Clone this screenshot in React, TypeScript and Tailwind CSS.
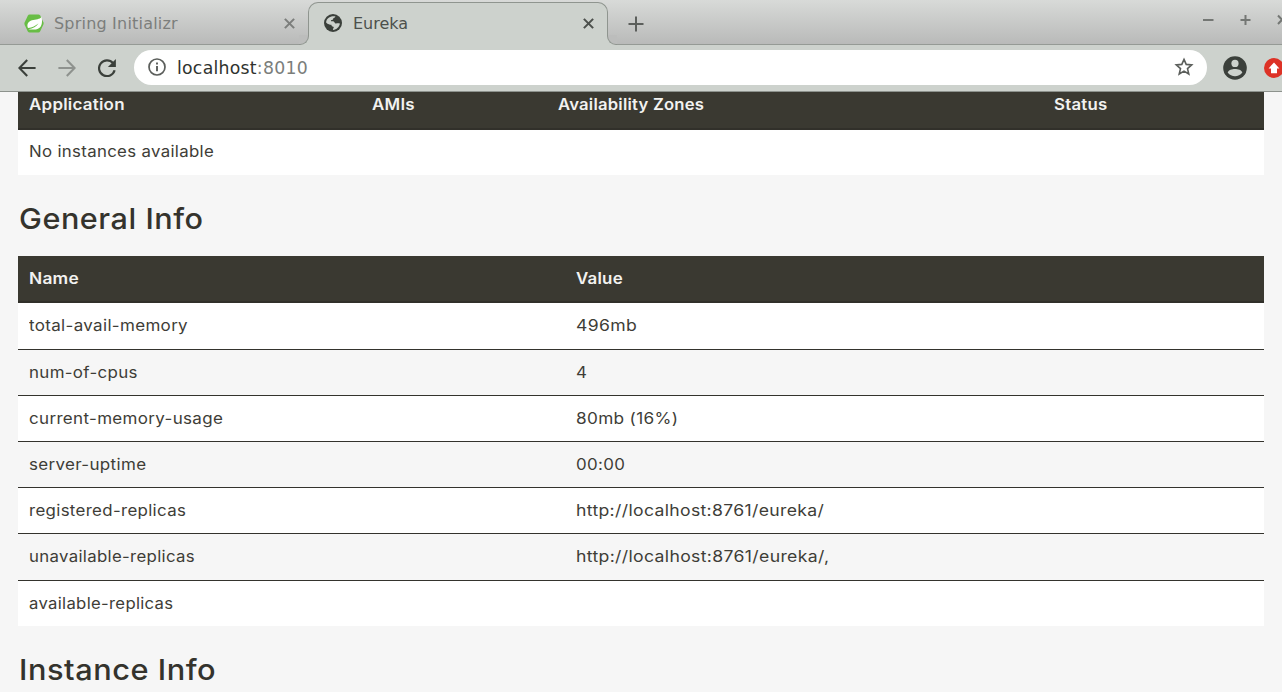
import React from "react";

type Row = { name: string; nameClass: string; value: string; valueClass: string };

const rows: Row[] = [
  { name: "total-avail-memory", nameClass: "scale-x-[1.096]", value: "496mb", valueClass: "scale-x-[1.134]" },
  { name: "num-of-cpus", nameClass: "scale-x-[1.09]", value: "4", valueClass: "scale-x-[1.09]" },
  { name: "current-memory-usage", nameClass: "scale-x-[1.096]", value: "80mb (16%)", valueClass: "scale-x-[1.11]" },
  { name: "server-uptime", nameClass: "scale-x-[1.096]", value: "00:00", valueClass: "scale-x-[1.09]" },
  { name: "registered-replicas", nameClass: "scale-x-[1.088]", value: "http://localhost:8761/eureka/", valueClass: "scale-x-[1.135]" },
  { name: "unavailable-replicas", nameClass: "scale-x-[1.083]", value: "http://localhost:8761/eureka/,", valueClass: "scale-x-[1.137]" },
  { name: "available-replicas", nameClass: "scale-x-[1.075]", value: "", valueClass: "" },
];

function CloseIcon({ className }: { className: string }) {
  return (
    <svg viewBox="0 0 10 10" className={className} fill="none" stroke="currentColor" strokeWidth="1.9">
      <path d="M0.8 0.8 L9.2 9.2 M9.2 0.8 L0.8 9.2" />
    </svg>
  );
}

function TabStrip() {
  return (
    <div className="flex h-[45px] w-full shrink-0 border-b border-[#959a95] bg-linear-to-b from-[#d8dad8] to-[#b9bab9]">
      <div className="flex h-[45px] w-[308px] shrink-0 items-center pl-[24px] pr-[13px] text-[#7c7e7c]">
        <svg viewBox="0 0 20 19" className="mt-[2px] h-[19px] w-5 shrink-0">
          <path d="M5.6 0.6 H14.4 Q15.6 0.6 16.2 1.6 L19.4 8.2 Q19.9 9.4 19.4 10.5 L16.2 17.2 Q15.6 18.4 14.4 18.4 H5.6 Q4.4 18.4 3.8 17.4 L0.6 10.8 Q0.1 9.5 0.6 8.4 L3.8 1.8 Q4.4 0.6 5.6 0.6Z" fill="#68bd45" />
          <path d="M17.6 3 C18.6 8 18.2 14.6 12 15.4 C8.6 15.8 6 15.6 4.4 15.2 C9 14.4 12.4 12.4 14.6 9.2 C11.4 12 8.4 13.4 4 13.9 C2.4 10.4 4.2 7.2 8 6.2 C12 5.3 15.6 5.4 17.6 3Z" fill="#fff" />
        </svg>
        <span className="ml-[10px] grow pt-[3px] text-[16px] tracking-[0.2px]">Spring Initializr</span>
        <CloseIcon className="mt-[2px] h-[11px] w-[11px]" />
      </div>
      <div className="relative mt-[2px] flex h-[43px] w-[300px] shrink-0 items-center rounded-t-[10px] border border-b-0 border-[#8f958f] bg-[#cdd2cd] pb-[2px] pl-[15px] pr-[13px] text-[#4c504c]">
        <div className="absolute -left-[10px] bottom-0 h-[10px] w-[10px] bg-[#cdd2cd]">
          <div className="h-[10px] w-[10px] rounded-br-[9px] border-b border-r border-[#8f958f] bg-[#bcbdbc]" />
        </div>
        <div className="absolute -right-[10px] bottom-0 h-[10px] w-[10px] bg-[#cdd2cd]">
          <div className="h-[10px] w-[10px] rounded-bl-[9px] border-b border-l border-[#8f958f] bg-[#bcbdbc]" />
        </div>
        <svg viewBox="0 0 18 18" className="h-[18px] w-[18px] shrink-0">
          <circle cx="9" cy="9" r="9" fill="#3b403b" />
          <path d="M8.6 2.2 L11.4 2.2 C11 3.7 9.8 3.7 9.2 4.5 C9.4 5.6 8.2 6 7 6.2 C6.8 7.2 7.2 7.4 8.6 7.3 C10.8 7.2 10.2 9 11.4 9.4 C12.8 9.6 14 9 15.9 9.6 C15.5 12.8 12.6 15.9 9 16 C8.6 14.8 9.8 14.2 9.8 13 C8.2 12.6 7.4 12 7.4 10.8 C5.8 10.8 4 10.2 2.1 8.4 C2.4 5 5.2 2.6 8.6 2.2Z" fill="#cdd2cd" />
        </svg>
        <span className="ml-[11px] grow pt-px text-[16px]">Eureka</span>
        <CloseIcon className="mt-px h-[11px] w-[11px]" />
      </div>
      <div className="flex h-[45px] grow items-center pl-[20px] text-[#5c5f5c]">
        <svg viewBox="0 0 16 16" className="mt-[2px] h-4 w-4" stroke="currentColor" strokeWidth="2">
          <path d="M8 0.5V15.5M0.5 8H15.5" />
        </svg>
      </div>
      <div className="flex h-10 w-[80px] shrink-0 items-center overflow-hidden text-[#747774]">
        <svg viewBox="0 0 80 12" className="h-3 w-[80px]" fill="none" stroke="currentColor" strokeWidth="2">
          <path d="M1 6H11.5M38.5 6H48.5M43.5 1V11M76 1.5L84 10M84 1.5L76 10" />
        </svg>
      </div>
    </div>
  );
}

function Toolbar() {
  return (
    <div className="flex h-[47px] w-full shrink-0 items-center overflow-hidden border-b border-[#8d928d] bg-[#cdd2cd] pb-px pl-[18px]">
      <svg viewBox="0 0 18 18" className="h-[18px] w-[18px] shrink-0" fill="none" stroke="#3b403b" strokeWidth="2.1">
        <path d="M17.6 9H1.8M9.2 0.9L1.4 9L9.2 17.1" />
      </svg>
      <svg viewBox="0 0 18 18" className="ml-[22px] h-[18px] w-[18px] shrink-0" fill="none" stroke="#8e928e" strokeWidth="2.1">
        <path d="M0.4 9H16.2M8.8 0.9L16.6 9L8.8 17.1" />
      </svg>
      <svg viewBox="0 0 18 18" className="ml-[22px] h-[18px] w-[18px] shrink-0">
        <path d="M15 4.1A7.9 7.9 0 1 0 16.6 11.3" fill="none" stroke="#3b403b" strokeWidth="2.2" />
        <path d="M17.9 0V8H9.9Z" fill="#3b403b" />
      </svg>
      <div className="mb-px ml-[18px] flex h-[35px] w-[1073px] shrink-0 items-center rounded-full bg-white pl-[14px] pr-[13px]">
        <svg viewBox="0 0 18 18" className="h-[18px] w-[18px] shrink-0" fill="none" stroke="#5b5e5b">
          <circle cx="9" cy="9" r="8" strokeWidth="1.7" />
          <path d="M9 8V13.2M9 4.6V6.5" strokeWidth="1.9" />
        </svg>
        <span className="ml-[11px] grow pt-[4px] text-[17.3px] tracking-[0.25px] text-[#2f332f]">
          localhost<span className="text-[#7b7e7b]">:8010</span>
        </span>
        <svg viewBox="0 0 20 20" className="h-5 w-5" fill="none" stroke="#5b5e5b" strokeWidth="1.6">
          <path d="M10 2.4L12.2 7.4L17.7 7.9L13.5 11.6L14.8 17L10 14.1L5.2 17L6.5 11.6L2.3 7.9L7.8 7.4Z" />
        </svg>
      </div>
      <svg viewBox="0 0 24 24" className="ml-[15.5px] h-6 w-6 shrink-0">
        <circle cx="12" cy="12" r="11.8" fill="#3b403b" />
        <circle cx="12" cy="7.4" r="3.6" fill="#cdd2cd" />
        <path d="M4.7 16.6C5.2 13.9 9.2 12.9 12 12.9S18.8 13.9 19.3 16.6C15.6 21.6 8.4 21.6 4.7 16.6Z" fill="#cdd2cd" />
      </svg>
      <svg viewBox="0 0 20 20" className="ml-[17.5px] h-5 w-5 shrink-0">
        <circle cx="10" cy="10" r="10" fill="#dd3226" />
        <path d="M10 4.4L15.4 10.4H13V15.2H7V10.4H4.6Z" fill="#fff" />
      </svg>
    </div>
  );
}

export default function App() {
  return (
    <div className="flex h-[692px] w-full flex-col overflow-hidden bg-[#f6f6f6] font-['DejaVu_Sans',sans-serif] whitespace-nowrap">
      <TabStrip />
      <Toolbar />
      <main className="ml-[18.3px] flex w-[1246px] flex-col font-['Inter',sans-serif] text-[15.5px] text-[#3e3d37]">
        <div className="flex h-[38px] shrink-0 border-b-2 border-[#31302a] bg-[#3a3931] pl-[10.4px] leading-[26px] font-semibold tracking-[0.2px] text-[#f2f2f0]">
          <span className="w-[343px]"><span className="inline-block origin-left scale-x-[1.095]">Application</span></span>
          <span className="w-[186px]"><span className="inline-block origin-left scale-x-[1.094]">AMIs</span></span>
          <span className="w-[496px]"><span className="inline-block origin-left scale-x-[1.074]">Availability Zones</span></span>
          <span className="inline-block origin-left scale-x-[1.084]">Status</span>
        </div>
        <div className="flex h-[45px] shrink-0 items-center bg-white pb-px pl-[10.4px] tracking-[0.3px]">
          <span className="origin-left scale-x-[1.084]">No instances available</span>
        </div>
        <h1 className="flex h-[81px] shrink-0 items-center pt-[6px] pl-[0.5px] text-[29px] font-medium tracking-[0.5px] text-[#34332d]">
          <span className="origin-left scale-x-[1.055]">General Info</span>
        </h1>
        <div className="flex h-[47.4px] shrink-0 items-center border-b-2 border-[#31302a] bg-[#3a3931] pb-px pl-[10.4px] font-semibold tracking-[0.2px] text-[#f2f2f0]">
          <span className="w-[547.3px]"><span className="inline-block origin-left scale-x-[1.12]">Name</span></span>
          <span className="origin-left scale-x-[1.09]">Value</span>
        </div>
        <section>
          {rows.map((row) => (
            <div key={row.name} className="flex h-[46.2px] items-center border-b border-[#34332d] pl-[10.4px] tracking-[0.3px] odd:bg-white even:bg-[#f6f6f6] last:h-[45.4px] last:border-b-0">
              <span className="w-[547.3px]"><span className={`inline-block origin-left ${row.nameClass}`}>{row.name}</span></span>
              <span className={`origin-left ${row.valueClass}`}>{row.value}</span>
            </div>
          ))}
        </section>
        <h1 className="flex h-[81px] shrink-0 items-center pt-[7px] pl-[0.5px] text-[29px] font-medium tracking-[0.5px] text-[#34332d]">
          <span className="origin-left scale-x-[1.06]">Instance Info</span>
        </h1>
      </main>
    </div>
  );
}
